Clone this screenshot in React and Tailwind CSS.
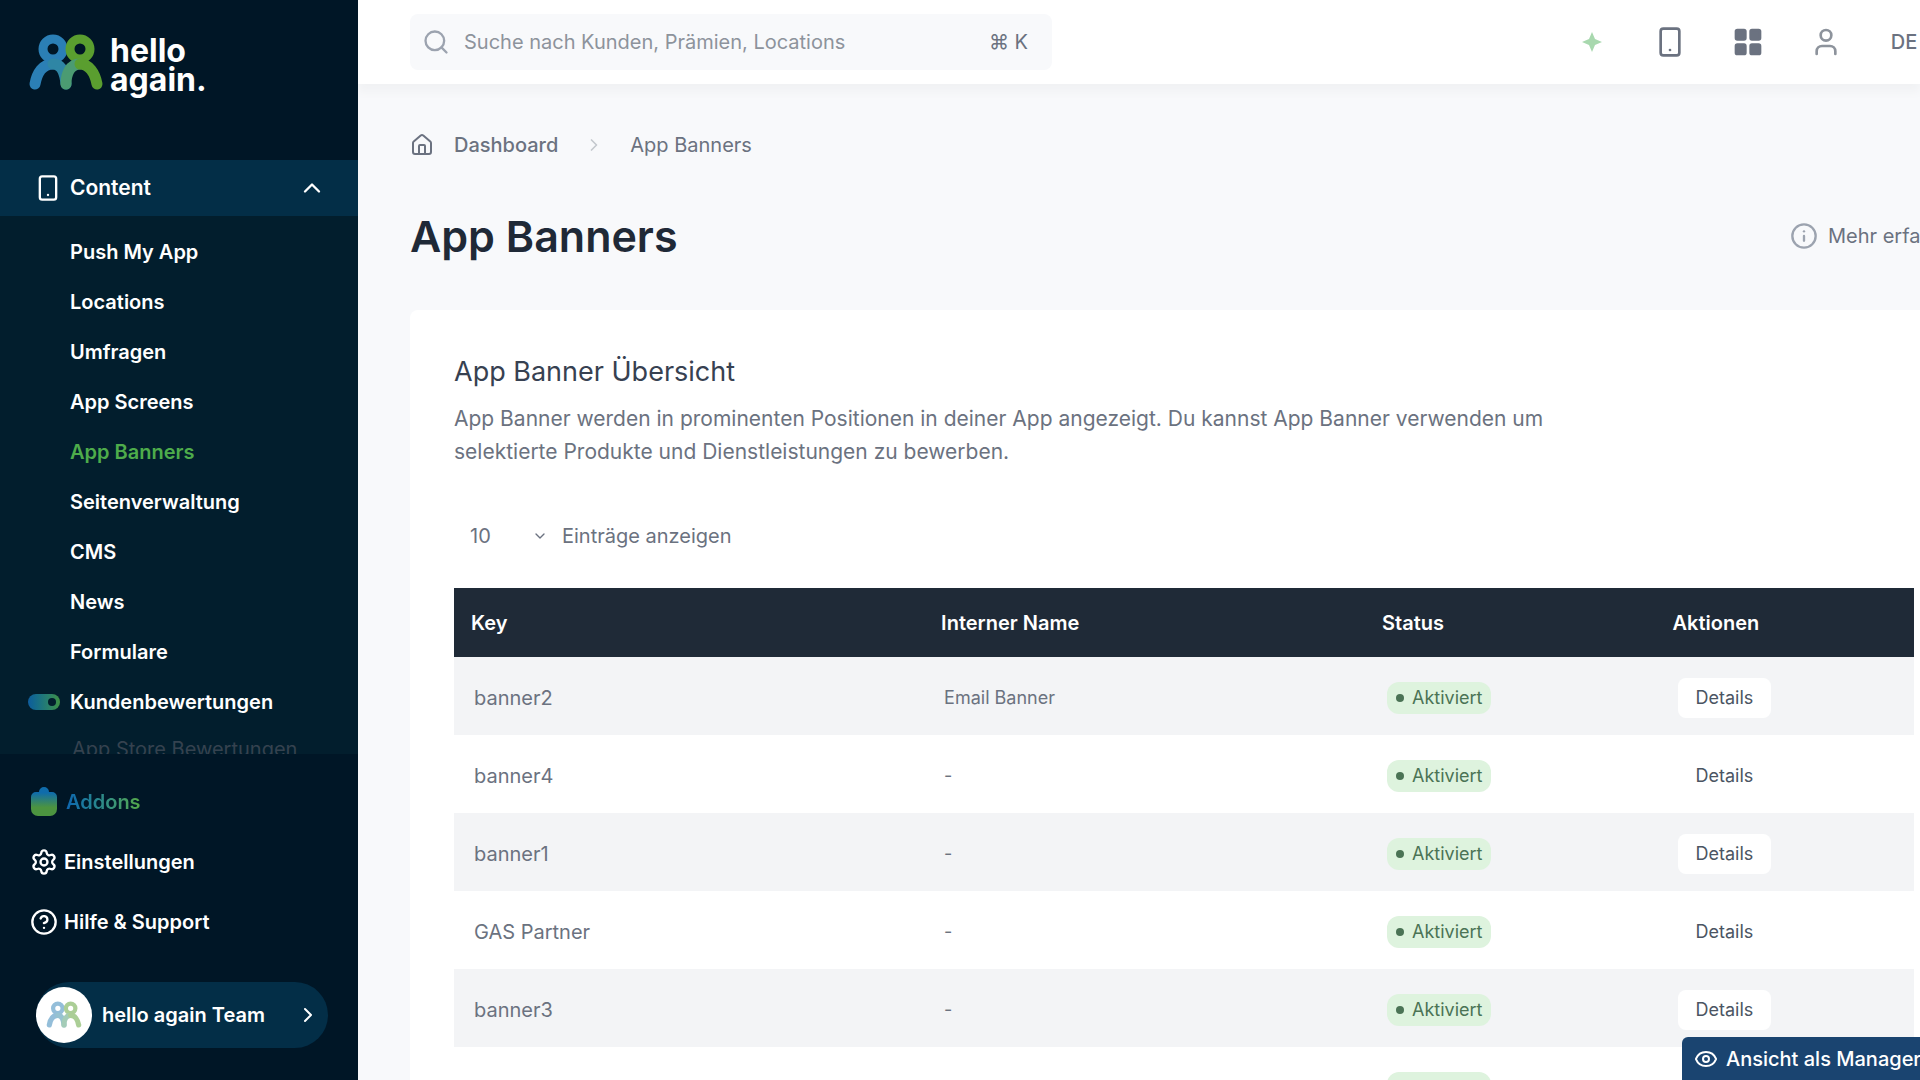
import {
  ChevronDown,
  ChevronRight,
  ChevronUp,
  CircleHelp,
  Eye,
  House,
  Info,
  LayoutGrid,
  Search,
  Settings,
  Smartphone,
  User,
} from "lucide-react";

const contentItems = [
  "Push My App",
  "Locations",
  "Umfragen",
  "App Screens",
  "App Banners",
  "Seitenverwaltung",
  "CMS",
  "News",
  "Formulare",
];

const banners = [
  { key: "banner2", name: "Email Banner" },
  { key: "banner4", name: "-" },
  { key: "banner1", name: "-" },
  { key: "GAS Partner", name: "-" },
  { key: "banner3", name: "-" },
  { key: "Spring Bonus Test", name: "-" },
];

function LogoMark({ className }) {
  return (
    <svg viewBox="0 0 76 58" className={className} fill="none" strokeLinecap="round" strokeWidth="11" aria-hidden="true">
      <circle cx="25" cy="15" r="10" stroke="#2b7fb5" strokeWidth="9" />
      <circle cx="52" cy="15" r="10" stroke="#5a9e2f" strokeWidth="9" />
      <path d="M7 50C9 39 15 30 25 30" stroke="#2b7fb5" />
      <path d="M25 30C34 30 37 40 38 50" stroke="#2f86a5" />
      <path d="M52 30C42 30 38 40 38 50" stroke="#4b9b72" />
      <path d="M52 30C61 30 67 39 69 50" stroke="#5a9e2f" />
    </svg>
  );
}

function Sidebar() {
  return (
    <aside className="w-[358px] shrink-0 relative z-10 flex flex-col bg-[#001626] text-white text-xl font-semibold">
      <a href="#" className="h-40 shrink-0 flex items-start pl-7 pt-8 gap-[6px]">
        <LogoMark className="w-[76px] h-[62px]" />
        <span className="flex flex-col text-[32px] leading-[29px] font-bold pt-1">
          <span>hello</span>
          <span>again.</span>
        </span>
      </a>

      <nav className="flex-1 min-h-0 overflow-hidden bg-[#021e2d]">
        <button className="w-full h-14 flex items-center bg-[#032e47] pl-[34px] pr-8">
          <Smartphone className="w-7 h-9 mr-2" />
          <span className="text-[21px]">Content</span>
          <ChevronUp className="w-7 h-7 ml-auto" />
        </button>
        <ul className="pt-[11px]">
          {contentItems.map((item) => (
            <li key={item}>
              <a
                href="#"
                className={`flex items-center h-[50px] pl-[70px] ${item === "App Banners" ? "text-[#4eac4b]" : ""}`}
              >
                {item}
              </a>
            </li>
          ))}
        </ul>
        <a href="#" className="flex items-center h-[50px] pl-7">
          <span className="w-8 h-4 mr-[10px] rounded-full bg-linear-to-r from-[#0f5c9c] to-[#3f9142] flex items-center justify-end pr-1">
            <span className="w-2 h-2 rounded-full bg-[#021e2d]" />
          </span>
          Kundenbewertungen
        </a>
        <a href="#" className="block pl-[72px] pt-2 leading-7 font-normal text-[#35424f]">
          App Store Bewertungen
        </a>
      </nav>

      <div className="shrink-0 flex flex-col pt-[18px] pb-8">
        <a href="#" className="flex items-center h-[60px] pl-7 gap-[6px]">
          <svg viewBox="0 0 32 32" className="w-8 h-8" aria-hidden="true">
            <defs>
              <linearGradient id="addon" x1="0" y1="0" x2="0" y2="1">
                <stop offset="0.2" stopColor="#0f6cab" />
                <stop offset="0.7" stopColor="#4c9440" />
              </linearGradient>
            </defs>
            <path
              fill="url(#addon)"
              d="M11 6a5 5 0 0 1 10 0h3a5 5 0 0 1 5 5v12a7 7 0 0 1-7 7H10a7 7 0 0 1-7-7V11a5 5 0 0 1 5-5z"
            />
          </svg>
          <span className="bg-linear-to-r from-[#0f66b0] to-[#56a943] bg-clip-text text-transparent">Addons</span>
        </a>
        <a href="#" className="flex items-center h-[60px] pl-[30px] gap-[6px]">
          <Settings className="w-7 h-7" />
          Einstellungen
        </a>
        <a href="#" className="flex items-center h-[60px] pl-[30px] gap-[6px]">
          <CircleHelp className="w-7 h-7" />
          Hilfe &amp; Support
        </a>
        <button className="mt-[30px] ml-9 mr-[30px] h-[66px] rounded-full bg-[#032e47] flex items-center pr-2">
          <span className="w-14 h-14 mr-[10px] rounded-full bg-white flex items-center justify-center">
            <LogoMark className="w-9 h-8 opacity-50" />
          </span>
          hello again Team
          <ChevronRight className="w-6 h-6 ml-auto" />
        </button>
      </div>
    </aside>
  );
}

function Topbar() {
  return (
    <header className="h-[84px] shrink-0 bg-white flex items-center pl-[52px] text-[#6b7280] shadow-[0_8px_8px_#f1f2f4]">
      <label className="w-[642px] h-14 rounded-lg bg-[#f8f9fb] flex items-center px-3 gap-[14px] shrink-0">
        <Search className="w-7 h-7 text-[#9ca3af]" />
        <input
          type="search"
          aria-label="Suche"
          placeholder="Suche nach Kunden, Prämien, Locations"
          className="flex-1 text-xl outline-none placeholder:text-[#8d939c]"
        />
        <kbd className="font-[Inter,'DejaVu_Sans',sans-serif] text-xl mr-3">⌘ K</kbd>
      </label>
      <div className="ml-auto flex items-center gap-[46px]">
        <button aria-label="Neuigkeiten" className="w-8 flex justify-center">
          <svg viewBox="0 0 20 20" className="w-5 h-5" aria-hidden="true">
            <path d="M10 0l3 7 7 3-7 3-3 7-3-7-7-3 7-3z" fill="#a8d8ae" />
          </svg>
        </button>
        <button aria-label="App Vorschau">
          <Smartphone className="w-8 h-9" />
        </button>
        <button aria-label="Apps">
          <LayoutGrid className="w-8 h-8" fill="currentColor" />
        </button>
        <button aria-label="Profil">
          <User className="w-8 h-8 text-[#8d939c]" />
        </button>
        <button className="w-8 text-xl font-medium">DE</button>
      </div>
    </header>
  );
}

function BannerTable() {
  return (
    <table className="w-full table-fixed text-left text-lg text-[#6b7280]">
      <colgroup>
        <col className="w-[32.2%]" />
        <col className="w-[30.2%]" />
        <col className="w-[19.9%]" />
        <col />
      </colgroup>
      <thead className="bg-[#1f2a37] text-xl text-white">
        <tr className="h-[69px]">
          <th className="pl-[17px] font-semibold">Key</th>
          <th className="pl-[17px] font-semibold">Interner Name</th>
          <th className="pl-[17px] font-semibold">Status</th>
          <th className="pl-[17px] font-semibold">Aktionen</th>
        </tr>
      </thead>
      <tbody>
        {banners.map((banner) => (
          <tr key={banner.key} className="h-[78px] odd:bg-[#f3f4f6]">
            <td className="pl-5 pt-1 text-xl">{banner.key}</td>
            <td className="pl-5 pt-1">{banner.name}</td>
            <td className="pl-[22px] pt-1">
              <span className="inline-flex items-center h-8 px-[9px] gap-2 rounded-xl bg-[#def3de] text-[#4b7355]">
                <span className="w-2 h-2 rounded-full bg-[#4b7355]" />
                Aktiviert
              </span>
            </td>
            <td className="pl-[22px] pt-1">
              <button className="h-10 px-[18px] rounded-lg bg-white text-[#4b5563]">Details</button>
            </td>
          </tr>
        ))}
      </tbody>
    </table>
  );
}

export default function App() {
  return (
    <div className="h-screen flex overflow-hidden bg-[#f8f9fb] font-[Inter,'Liberation_Sans',sans-serif]">
      <Sidebar />
      <div className="flex-1 min-w-0 flex flex-col">
        <Topbar />
        <main className="flex-1 min-h-0 overflow-hidden pl-[52px]">
          <nav aria-label="Breadcrumb" className="pt-11 h-[77px] flex items-center text-xl text-[#6b7280]">
            <House className="w-6 h-6 mr-5" />
            <a href="#" className="font-medium">Dashboard</a>
            <ChevronRight className="w-5 h-5 mx-[26px] text-[#c4c8ce]" />
            <span>App Banners</span>
          </nav>

          <div className="h-[149px] flex items-center justify-between">
            <h1 className="text-[43px] leading-[48px] font-semibold text-[#1f2937]">App Banners</h1>
            <a href="#" className="w-[130px] overflow-hidden flex items-center gap-[10px] text-xl text-[#6b7280] whitespace-nowrap">
              <Info className="w-7 h-7 shrink-0 text-[#9ca3af]" />
              Mehr erfahren
            </a>
          </div>

          <section className="bg-white rounded-l-lg pl-11 pr-[6px] pt-11">
            <h2 className="text-[27px] leading-9 text-[#374151]">App Banner Übersicht</h2>
            <p className="mt-3 max-w-[1110px] text-[21px] leading-[33px] text-[#6b7280]">
              App Banner werden in prominenten Positionen in deiner App angezeigt. Du kannst App Banner verwenden um
              selektierte Produkte und Dienstleistungen zu bewerben.
            </p>
            <label className="mt-[46px] mb-[30px] h-11 flex items-center text-xl text-[#6b7280]">
              <select defaultValue="10" className="appearance-none w-[78px] pl-4 text-xl">
                <option>10</option>
                <option>25</option>
                <option>50</option>
              </select>
              <ChevronDown className="w-4 h-4 mr-[14px]" />
              Einträge anzeigen
            </label>
            <BannerTable />
          </section>
        </main>
      </div>

      <button className="fixed right-0 bottom-0 w-[238px] h-[43px] overflow-hidden flex items-center pl-3 gap-2 rounded-tl-md bg-[#1a4470] text-xl font-medium text-white whitespace-nowrap">
        <Eye className="w-6 h-6 shrink-0" />
        Ansicht als Manager
      </button>
    </div>
  );
}
